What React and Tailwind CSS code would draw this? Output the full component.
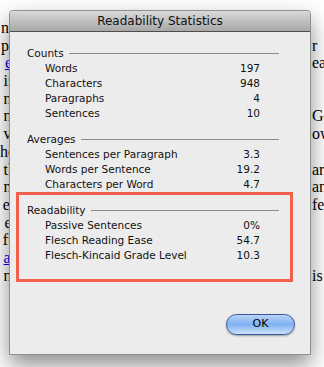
import React from 'react'

const lines = [
  { l: 'nc', r: '' },
  { l: 'pe', r: 'r' },
  { l: 'e ', r: 'ea', link: true },
  { l: 'in', r: '' },
  { l: 'ni', r: '' },
  { l: 'nt', r: 'Go' },
  { l: 'vi', r: 'ow' },
  { l: 'ho', r: '' },
  { l: 'th', r: 'ar' },
  { l: 'm', r: 'an' },
  { l: 'es', r: 'fe' },
  { l: 'el', r: '' },
  { l: 'fu', r: '' },
  { l: 'ar', r: '', link: true },
  { l: 'nt', r: 'is' }
]

const sections = [
  {
    title: 'Counts',
    rows: [
      ['Words', '197'],
      ['Characters', '948'],
      ['Paragraphs', '4'],
      ['Sentences', '10']
    ]
  },
  {
    title: 'Averages',
    rows: [
      ['Sentences per Paragraph', '3.3'],
      ['Words per Sentence', '19.2'],
      ['Characters per Word', '4.7']
    ]
  }
]

const readability = {
  title: 'Readability',
  rows: [
    ['Passive Sentences', '0%'],
    ['Flesch Reading Ease', '54.7'],
    ['Flesch-Kincaid Grade Level', '10.3']
  ]
}

const Section = ({ title, rows }) => (
  <div>
    <div className="flex items-center h-[15px]">
      <span>{title}</span>
      <div className="flex-1 h-px bg-[#8c8c8c] ml-[5px]"></div>
    </div>
    {rows.map(([label, value]) => (
      <div key={label} className="flex h-[15px] pl-[18px] pr-[19px]">
        <span className="flex-1">{label}</span>
        <span>{value}</span>
      </div>
    ))}
  </div>
)

const App = () => {
  return (
    <div className="relative w-[324px] h-[367px] overflow-hidden bg-white">
      {/* page behind the dialog */}
      <div
        className="pt-[19px] text-[16px] leading-[17.7px] text-black"
        style={{ fontFamily: '"Liberation Serif", serif' }}
      >
        {lines.map((line, i) => (
          <div key={i} className="flex h-[17.7px] whitespace-pre">
            <div className="w-[312px] shrink-0 flex justify-end pr-[296px]">
              <span className={line.link ? 'text-[#0000ee] underline' : ''}>{line.l}</span>
            </div>
            <span>{line.r}</span>
          </div>
        ))}
      </div>

      {/* dialog */}
      <div
        className="absolute left-[9px] top-[10px] w-[302px] h-[345px] flex flex-col bg-[#ececec] border border-[#8f8f8f] rounded-t-[4px] shadow-[0_10px_22px_rgba(0,0,0,0.45)] text-[#111]"
        style={{ fontFamily: '"DejaVu Sans", sans-serif' }}
      >
        <div className="h-[21px] shrink-0 flex items-center justify-center rounded-t-[4px] bg-gradient-to-b from-[#dadada] to-[#a7a7a7] border-b border-[#4e4e4e] text-[12px]">
          Readability Statistics
        </div>
        <div className="flex-1 pt-[14px] pl-[17px] pr-[31px] text-[10.5px] leading-[15px]">
          <Section {...sections[0]} />
          <div className="mt-[11px]">
            <Section {...sections[1]} />
          </div>
          <div className="-ml-[11px] -mr-[14px] border-[3px] border-[#f1604e] pt-[8px] pb-[16px] pl-[8px] pr-[11px]">
            <Section {...readability} />
          </div>
        </div>
        <div className="flex justify-end pr-[15px] pb-[19px]">
          <button className="w-[69px] h-[21px] rounded-full border border-[#3c56a3] bg-gradient-to-b from-[#b9d4f6] via-[#7fb1f1] to-[#cde3fc] shadow-[0_1px_2px_rgba(0,0,0,0.35)] text-[11px] text-black flex items-center justify-center">
            OK
          </button>
        </div>
      </div>
    </div>
  )
}

export default App
